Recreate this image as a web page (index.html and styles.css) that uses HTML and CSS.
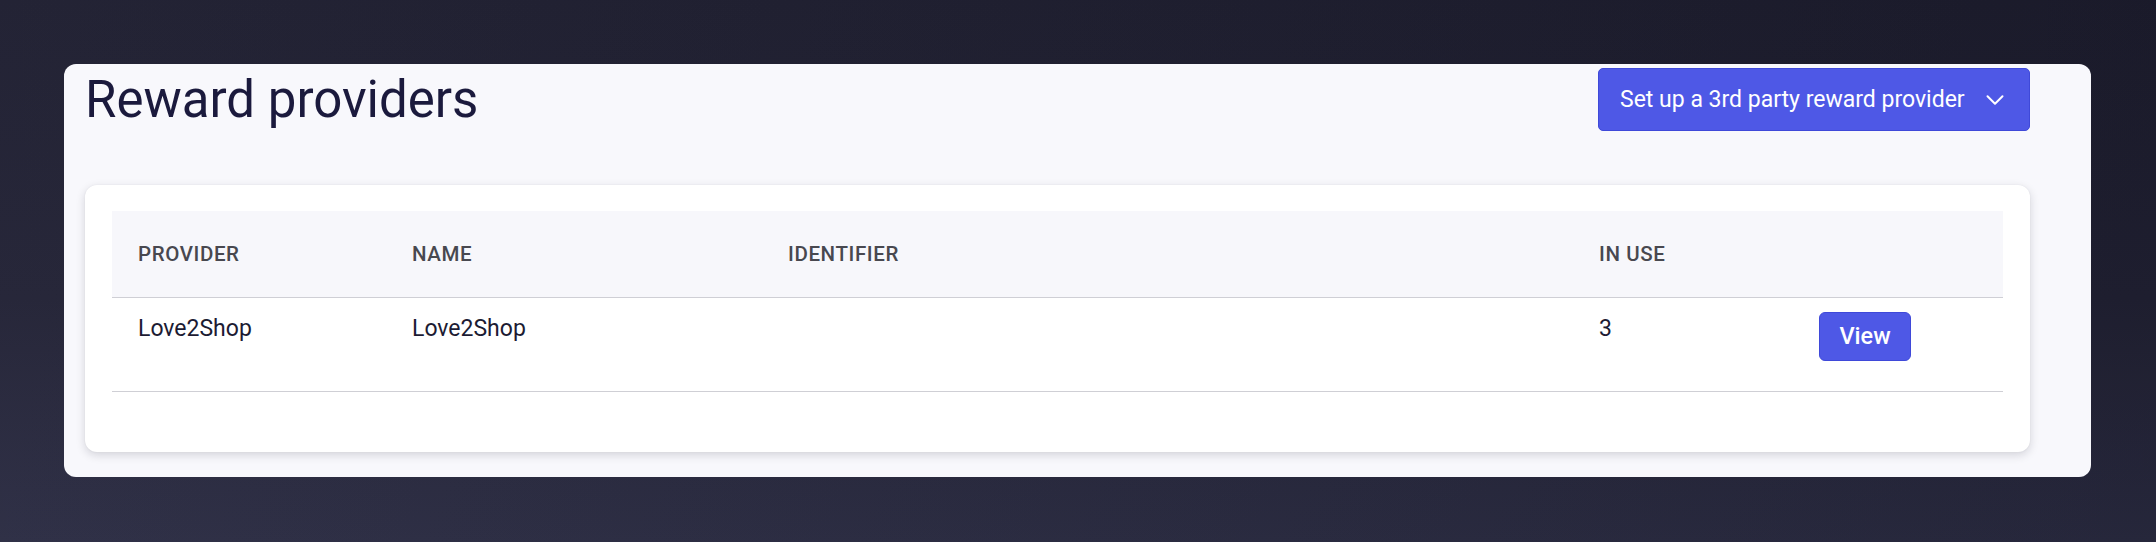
FILE: index.html
```html
<!DOCTYPE html>
<html lang="en">
<head>
<meta charset="utf-8">
<title>Reward providers</title>
<link rel="stylesheet" href="styles.css">
</head>
<body>
<main class="panel">
  <header class="panel-header">
    <h1 class="title">Reward providers</h1>
    <button class="btn btn-primary setup-btn" type="button">
      <span class="setup-label">Set up a 3rd party reward provider</span>
      <svg class="chevron" width="30" height="30" viewBox="0 0 24 24" fill="none" stroke="currentColor" stroke-width="1.6" stroke-linecap="round" stroke-linejoin="round" aria-hidden="true"><path d="M6 9l6 6 6-6"/></svg>
    </button>
  </header>
  <section class="card">
    <table class="providers">
      <colgroup>
        <col class="c-provider">
        <col class="c-name">
        <col class="c-identifier">
        <col class="c-inuse">
        <col class="c-action">
      </colgroup>
      <thead>
        <tr>
          <th>Provider</th>
          <th>Name</th>
          <th>Identifier</th>
          <th>In use</th>
          <th></th>
        </tr>
      </thead>
      <tbody>
        <tr>
          <td>Love2Shop</td>
          <td>Love2Shop</td>
          <td></td>
          <td>3</td>
          <td><button class="btn btn-primary view-btn" type="button">View</button></td>
        </tr>
      </tbody>
    </table>
  </section>
</main>
</body>
</html>
```
FILE: styles.css
```css
html, body {
  margin: 0;
  height: 542px;
  overflow: hidden;
}

body {
  font-family: Roboto, "Liberation Sans", Arial, sans-serif;
  background:
    linear-gradient(to right, rgba(255,255,255,0.025), rgba(0,0,0,0.12)),
    linear-gradient(to bottom, #1e1e30 0%, #222235 55%, #2b2c43 100%);
  padding: 64px 0 0 64px;
  box-sizing: border-box;
}

.panel {
  width: 2027px;
  height: 413px;
  box-sizing: border-box;
  background: #f8f8fc;
  border-radius: 12px;
  padding: 4px 61px 0 21px;
}

.panel-header {
  display: flex;
  justify-content: space-between;
  align-items: flex-start;
  height: 63px;
}

.title {
  margin: 1px 0 0 0;
  font-size: 51px;
  font-weight: 400;
  line-height: 61px;
  color: #1b1a3d;
  white-space: nowrap;
}

.btn {
  font-family: Roboto, "Liberation Sans", Arial, sans-serif;
  color: #fff;
  background: #4e58e6;
  border: 1px solid #3f49d9;
  cursor: pointer;
}

.setup-btn {
  display: flex;
  align-items: center;
  justify-content: space-between;
  width: 432px;
  height: 63px;
  padding: 0 19px 0 21px;
  border-radius: 5px;
  font-size: 23px;
  font-weight: 400;
  box-sizing: border-box;
}

.setup-label {
  white-space: nowrap;
}

.chevron {
  display: block;
  flex: none;
}

.card {
  margin-top: 54px;
  background: #fff;
  border-radius: 12px;
  box-shadow: 0 3px 10px rgba(20, 20, 40, 0.16), 0 0 2px rgba(20, 20, 40, 0.06);
  padding: 26px 27px 60px 27px;
  height: 267px;
  box-sizing: border-box;
}

.providers {
  width: 1891px;
  border-collapse: collapse;
  table-layout: fixed;
}

.c-provider { width: 274px; }
.c-name { width: 376px; }
.c-identifier { width: 811px; }
.c-inuse { width: 220px; }
.c-action { width: 210px; }

.providers thead tr {
  background: #f7f7fb;
}

.providers th {
  height: 86px;
  padding: 0 26px;
  text-align: left;
  vertical-align: middle;
  font-size: 20.5px;
  font-weight: 500;
  letter-spacing: 0.6px;
  text-transform: uppercase;
  color: #48484f;
  border-bottom: 1px solid #cfcfd5;
  box-sizing: border-box;
}

.providers td {
  padding: 14px 26px 30px 26px;
  vertical-align: top;
  font-size: 23px;
  line-height: 33px;
  color: #1c1b33;
  border-bottom: 1px solid #cfcfd5;
}

.view-btn {
  display: block;
  width: 92px;
  height: 49px;
  border-radius: 6px;
  font-size: 23.5px;
  font-weight: 500;
  padding: 0;
  box-sizing: border-box;
}
```
